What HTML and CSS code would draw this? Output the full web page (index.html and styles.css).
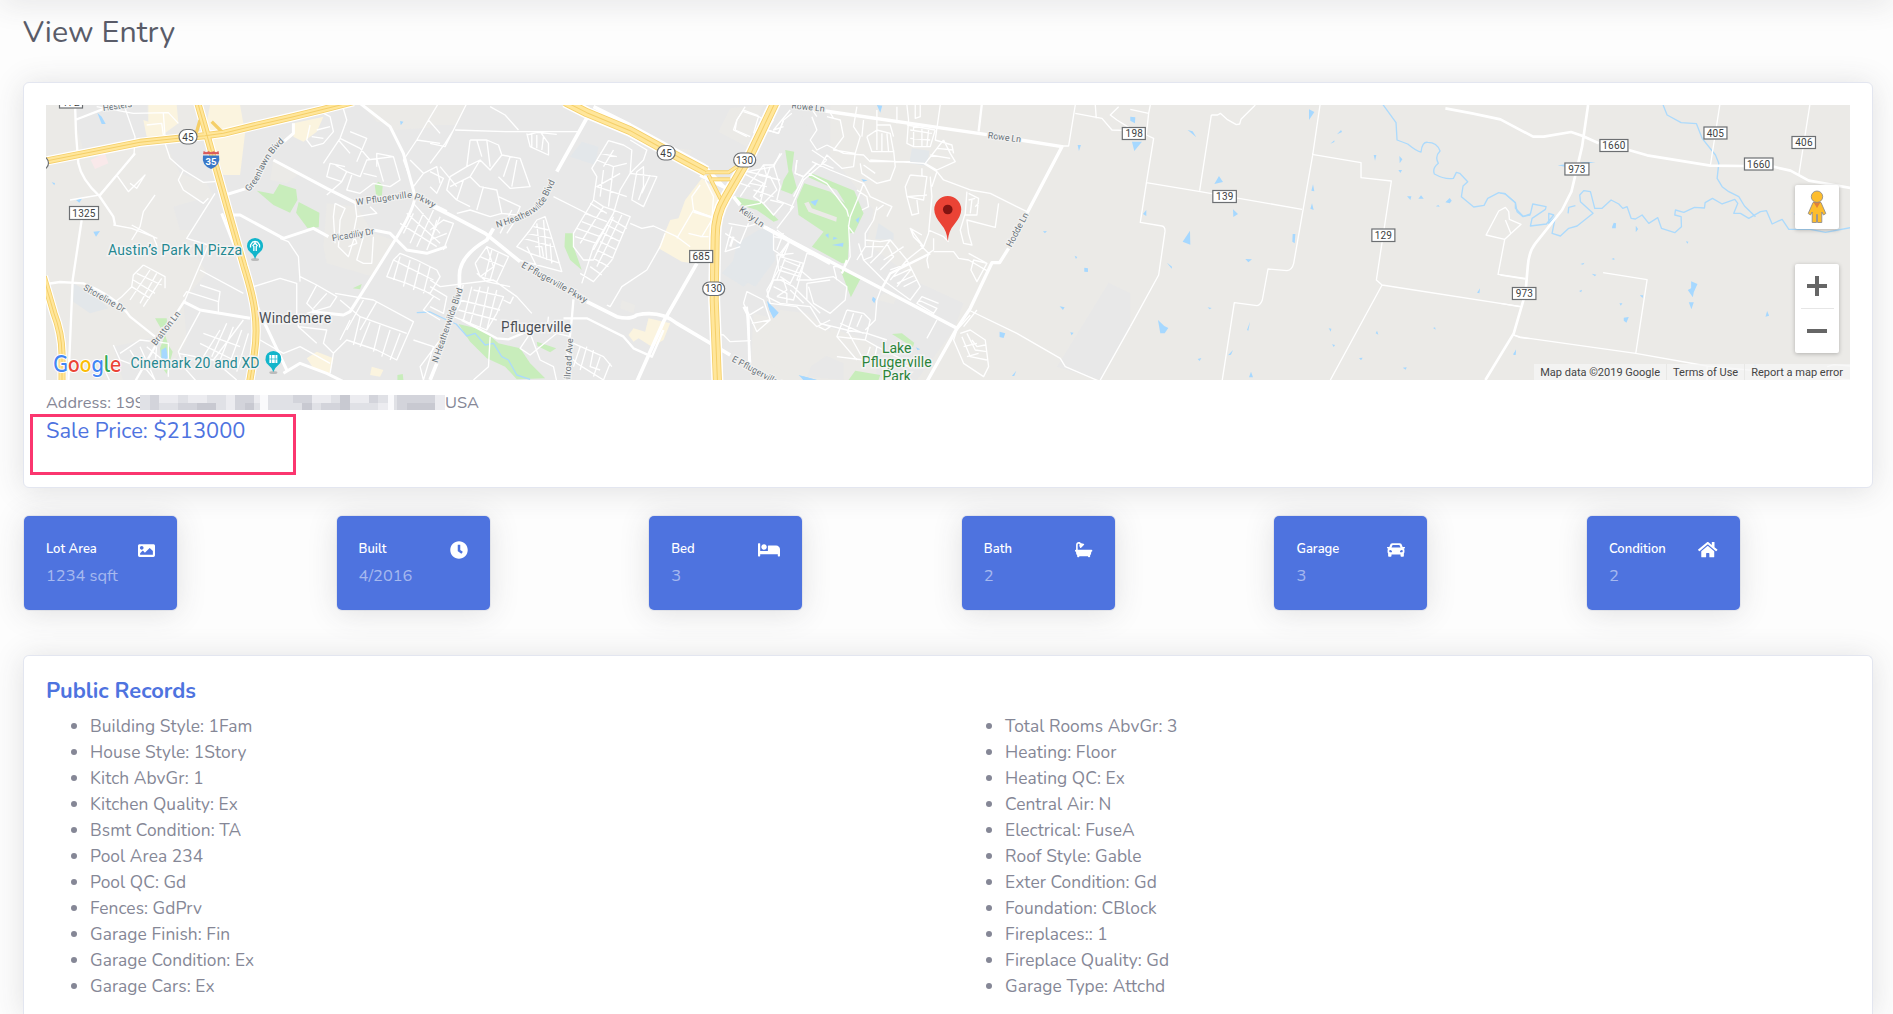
FILE: index.html
```
<!DOCTYPE html>
<html lang="en">
<head>
<meta charset="utf-8">
<title>View Entry</title>
<link rel="stylesheet" href="styles.css">
</head>
<body>
<div class="topbar-shadow"></div>
<main class="page">
  <h1 class="page-title"><span>View Entry</span></h1>

  <section class="card overview">
    <div class="map">
      <svg class="map-canvas" viewBox="46 105 1803.5 275" preserveAspectRatio="none">
        <defs>
          <path id="sh45w" d="M14 184L150 157L300 127L415 115L495 107L550 100L640 78L760 50L850 28L940 5"/>
          <path id="i35" d="M472 5L495 85L530 210L575 370L612 500Q640 590 645 640Q652 700 643 760L628 850"/>
          <path id="mopac" d="M10 530L42 640Q65 700 66 760L66 850"/>
          <path id="sh45e" d="M405 5L470 38L600 92L700 147L828 215"/>
          <path id="sh130" d="M1036 5L960 165L885 295Q855 345 855 410L852 600L862 850"/>
          <path id="ramp1" d="M825 217L895 217L935 190"/>
          <path id="ramp2" d="M845 238L900 238"/>
          <path id="ramp3" d="M835 225L878 310"/>
          <path id="heather" d="M200 383Q320 350 345 305Q365 265 378 238"/>
          <path id="wpf" d="M948 316Q1060 300 1105 293Q1150 303 1185 328"/>
          <path id="green" d="M626 276Q650 255 665 220Q690 160 740 120"/>
        </defs>

        <rect x="46" y="105" width="1804" height="275" fill="#ebeae7"/>

        <!-- built-up areas -->
        <g transform="translate(40 100) scale(.33333)">
          <path class="urban" d="M100 15L320 15L330 115L130 150L110 80ZM375 130L500 110L900 15L960 15L1060 90L1220 80L1220 845L370 845L440 720L430 600L500 520L440 415L520 290L500 250L420 220Z"/>
          <path class="urban" d="M400 320L470 300L560 300L520 390L420 390Z"/>
          <path class="urban" d="M220 740L350 710L400 845L250 845Z"/>
          <path fill="#ebeae7" d="M965 15L1210 15L1220 70L1090 75L1010 65ZM700 180L780 220L740 250L690 240ZM860 310L950 320L1000 400L1060 420L1000 530L860 490L850 440Z"/>
          <path class="shop" d="M325 15L410 15L415 70L360 110L325 90ZM510 15L600 15L615 100L600 225L550 225L515 120L500 70ZM760 70L850 50L830 95L790 125L760 110Z"/>
          <path class="shop" d="M310 60L370 80L375 115L320 110ZM800 775L830 755L880 775L870 820L820 805ZM995 800L1030 810L1020 830L990 825Z"/>
          <path class="office" d="M100 550L170 590L205 625L150 640L100 605Z"/>
          <path fill="#f9e9ea" d="M152 180L195 160L205 190L165 207Z"/>
          <path class="park" d="M650 272L700 282L718 252L768 268L772 300L750 338L700 315ZM776 306L838 338L836 382L802 384L768 338ZM1004 255L1015 245L1028 255L1025 290L1008 285ZM345 655L380 655L382 672L362 684ZM375 705L385 735L398 755L380 822L365 800L360 745ZM938 565L965 552L960 568ZM1072 825L1088 822L1090 840L1072 840Z"/>
          <path class="water" d="M172 38L185 50L197 72L185 72ZM108 300L127 294L118 308ZM160 395L180 393L168 410ZM35 247L45 249L43 256ZM364 750L378 742L386 780L364 778ZM1080 63L1090 65L1082 76Z"/>
        </g>
        <g transform="translate(430 100) scale(.33333)">
          <path class="urban" d="M0 15L1200 15L1200 700L970 640L960 845L0 845Z"/>
          <path fill="#ebeae7" d="M900 25L1000 15L950 140L865 95ZM1040 640L1200 700L1200 845L1130 845L965 770ZM735 145L785 150L775 175ZM575 600L615 615L610 640L570 625ZM0 15L110 15L75 75L0 75Z"/>
          <path class="office" d="M455 125L505 140L495 195L420 170ZM960 400L1040 390L1045 480L985 520L940 560L875 520L920 470Z"/>
          <path class="shop" d="M815 235L870 275L862 350L848 440L790 490L755 485L685 445L720 360L745 355L765 300ZM655 655L720 670L700 720L665 740L625 715L610 725L595 705L610 685L645 695Z"/>
          <path class="park" d="M405 400L428 400L430 440L455 510L420 480L403 440ZM1065 150L1092 155L1085 210L1100 265L1085 283L1052 270L1060 240L1075 215ZM915 290L990 305L1045 360L1030 365L980 330L930 315ZM85 672L160 690L205 730L270 745L300 790L345 835L260 838L225 800L170 775L120 725ZM320 725L378 745L360 757L322 738Z"/>
          <path class="water" d="M1010 602L1045 638L1030 655L1018 630ZM1105 825L1160 840L1120 840Z"/>
        </g>
        <g transform="translate(730 100) scale(.33333)">
          <path class="urban" d="M150 15L200 15L260 150L330 200L430 330L410 430L570 550L700 610L670 690L560 840L440 830L430 730L100 610L0 420L0 300ZM1135 548L1200 580L1200 680L1110 840L980 800ZM260 755L340 790L340 840L230 830Z"/>
          <path fill="#ebeae7" d="M150 630L230 640L330 720L300 760L240 800L210 840L80 770ZM460 580L500 590L490 612L440 600Z"/>
          <path class="office" d="M85 390L125 380L135 480L75 560L0 520L20 430ZM545 145L598 152L590 197L537 190ZM445 370L490 400L490 420L435 418Z"/>
          <path class="park" d="M165 150L192 155L185 210L200 265L185 283L152 270L160 240L175 215ZM240 218L372 272L400 340L372 398L358 400L352 490L335 490L245 440L280 395L205 345L200 300L222 250L300 275L345 310L320 270L235 232ZM330 508L390 538L362 592ZM15 290L90 305L145 360L130 365L80 330L30 315ZM485 702L515 700L552 728L548 742ZM375 812L450 825L445 840L355 840Z"/>
          <path class="water" d="M440 15L456 17L450 38ZM110 602L145 638L130 655L118 630ZM240 305L265 298L255 318ZM285 405L295 400L295 415ZM310 410L322 415L308 420ZM305 435L340 428L338 440ZM376 360L388 350L384 370ZM428 590L437 597L432 610L425 600ZM205 825L260 840L220 840ZM1042 135L1052 135L1046 153ZM938 394L950 393L944 400ZM1033 467L1041 471L1037 477ZM1062 503L1073 505L1073 516L1062 515ZM988 619L1003 622L998 630ZM808 695L825 700L820 714L808 711ZM1020 697L1030 698L1024 706ZM845 828L858 812L852 828ZM393 237L412 241L400 245ZM557 742L570 748L562 750Z"/>
        </g>
        <g transform="translate(1130 100) scale(.33333)">
          <path class="water" d="M0 50L15 52L14 70L0 62ZM5 125L35 125L12 153ZM172 90L187 94L198 112ZM536 28L552 36L536 60ZM620 103L632 90L635 96ZM600 131L612 121L612 126ZM252 252L266 228L278 246ZM308 328L323 342L309 351ZM38 342L48 330L48 348ZM157 425L179 392L180 434ZM110 488L125 500L124 506ZM487 402L495 402L493 430L486 425ZM345 477L365 478L354 487ZM543 272L548 253L552 274ZM540 326L545 310L550 330ZM730 165L738 165L734 182ZM807 168L816 178L808 190ZM804 210L815 210L810 219ZM830 289L843 289L840 300ZM864 296L872 286L880 296ZM945 307L958 294L964 302L958 310ZM916 319L924 315L928 320ZM83 660L102 678L114 684L103 700L90 700ZM232 622L244 624L238 628ZM350 690L359 665L354 692ZM293 766L308 750L302 764ZM202 777L213 774L208 783ZM356 832L362 815L368 832ZM595 685L603 686L601 695ZM605 733L614 735L610 741ZM736 700L740 692L744 704ZM686 774L697 773L692 781ZM817 803L829 802L826 809ZM908 684L914 682L916 689ZM1040 578L1049 565L1047 580ZM1149 765L1157 748L1155 765Z"/>
          <path class="creek" d="M755 10L797 68L800 120L832 132Q860 155 872 156Q875 125 892 127Q920 127 929 153Q912 170 924 190Q905 205 912 222Q945 240 969 235L978 217L988 220L1012 245L998 258L993 290L1030 321L1061 316L1072 295L1105 278L1125 282L1155 308L1155 325L1178 349L1200 345"/>
        </g>
        <g transform="translate(1500 70) scale(.33333)">
          <path class="creek" d="M0 370L12 370L45 398L50 425L68 440L90 432L97 402L137 410L135 418L95 445L90 468L138 462L160 435L145 430L145 460L165 440L155 490L180 498L205 475L230 468L278 430L240 395L238 375L250 362L270 365L283 415L305 415L332 390L355 402L367 415L380 410L392 445L405 447L425 435L445 460L472 443L483 475L523 488L543 470L542 440L523 435L525 420L550 427L582 412L612 414L614 398L636 385L665 402L703 388L712 400L700 430L720 430L745 445L780 425L798 422L815 462L845 448L865 478L930 478L975 487L1050 473"/>
          <path class="creek" d="M488 105L500 135L542 158L588 161L605 205L645 255L655 280L650 325L665 350L685 365L715 380L732 408L765 440"/>
          <path class="creek" d="M203 430L205 412L225 407"/>
          <path class="water" d="M172 286L225 280L200 292ZM240 276L285 276L250 283ZM335 470L340 458L347 460L346 475L335 475ZM406 467L413 477L406 487ZM556 514L564 515L561 521ZM240 582L252 578L248 584ZM274 611L288 614L283 619ZM333 567L341 564L342 570ZM236 663L245 659L242 667ZM357 700L366 700L361 707ZM418 676L428 676L427 684ZM370 743L385 741L378 758L370 752ZM572 634L591 642L580 667L577 682L562 660L572 655ZM565 697L580 697L573 718ZM795 740L800 723L806 737ZM38 853L47 840L45 855ZM882 432L888 425L888 440ZM758 885L768 884L765 892Z"/>
        </g>
        <g transform="translate(430 100) scale(.33333)"><path class="creek" d="M-40 638L0 636L50 660L78 672L110 708L135 700L165 735L190 730L215 770L235 780L260 825L300 838"/></g>
        <g transform="translate(730 100) scale(.33333)"><path fill="#ebeae7" d="M222 310L235 305L245 325L320 352L318 365L235 335Z"/></g>

        <!-- residential streets -->
        <g class="minor" transform="translate(40 100) scale(.33333)">
          <path d="M250 10L285 110L282 165L178 285L90 300M170 20L280 40L385 38L415 70M320 75L365 70L370 105M370 40L375 110M375 130L390 175L430 210L490 247L525 245M430 210L415 240L430 270L490 310L505 295M525 280L440 415L505 435M232 228L265 275L315 225L290 265L270 250M345 285L310 335L300 380L275 420M220 375L275 385L352 415M275 375L340 410L352 440M435 600L505 435M480 510L610 580M310 495L375 530L375 565M310 495L280 525L275 560L245 590L220 610M290 520L365 555M280 540L345 580M275 560L330 595M330 510L270 600M350 520L300 610M365 535L310 620"/>
          <path d="M640 560L720 535L770 550L770 640L775 680L830 730M780 545L775 470L745 425M745 425L720 415M780 530L830 555L890 590L870 620L800 640M830 555L800 610L830 640M860 580L820 625M775 680L860 690L850 730L880 760L870 820M885 580L1000 600L1120 665L1070 780L1010 750L920 720L880 760M900 600L960 650L1100 700M930 660L900 720M960 650L940 735M990 665L960 740M1020 675L1000 755M1050 690L1025 770M1080 700L1050 780M970 600L920 690M1010 605L960 690M1200 720L1140 800L1150 840M1120 720L1180 740L1150 840"/>
          <path d="M430 590L440 575L535 605L535 640M480 555L540 575L535 610M480 635L415 755L430 800L470 845M415 760L520 780L590 840M520 780L610 660M540 690L490 770M560 670L515 770M580 680L540 780M605 690L565 800M625 700L590 815M490 700L600 740M480 730L580 780M660 720L730 760L780 740L870 790M220 735L240 780L320 810L345 840M240 760L300 720L385 730L385 830M270 750L300 800M300 740L345 840M320 740L380 790M350 735L345 800M190 800L210 845"/>
          <path d="M810 75L800 120L815 140L850 130L880 95L870 50L840 35M830 90L870 80M815 110L850 115M905 10L920 60L900 115L850 190M900 115L960 145L990 180M930 95L980 115L950 185M895 120L930 160M885 195L920 215L905 245L860 230L870 190L915 200M905 245L860 285M920 215L960 230L980 180L1060 170L1080 240L1050 260L1000 250L960 280L920 270L935 225M970 220L1010 230M1010 175L1030 245M1060 170L1010 160L1010 200M1110 180L1150 220L1190 200L1200 250M1150 220L1120 260L1090 180L1130 120L1200 130M1130 120L1165 60L1195 10M1165 60L1200 100M1200 200L1250 260"/>
          <path d="M885 310L915 325L900 360L895 440L925 470L950 390L1000 400M885 310L880 350L885 430M945 310L950 350L940 400L950 430L925 440M950 350L1010 340L990 320M970 410L950 480L970 490L995 490L1000 410M1120 310L1200 400M1100 340L1200 430M1080 370L1190 440M1120 340L1090 400M1150 340L1110 430M1180 330L1130 440M1200 350L1160 450M1060 480L1080 460L1130 480L1190 510L1200 530L1170 580L1100 550L1040 530L1060 480L1100 500L1180 540M1080 470L1060 540M1110 480L1090 560M1140 490L1120 570M1170 500L1150 580M1150 570L1200 600M1180 590L1150 630L1200 660"/>
        </g>
        <g class="minor" transform="translate(430 100) scale(.33333)">
          <path d="M110 10L70 90L45 130L0 190M75 90L225 95L445 95M180 20L225 45L265 90M70 90L45 140L0 130M120 120L170 120L205 135L215 165L180 210L150 180L110 200L120 120M140 120L155 170M170 120L180 200M215 165L270 175L300 260L240 265L205 230M240 170L220 230M260 180L245 260M110 200L60 230L50 270L80 300L120 320M150 180L120 230L150 260L200 270L215 340L180 350L120 330L80 340M120 230L60 260M100 240L80 300M160 260L140 330M0 215L40 235L20 280L0 260M205 290L270 320L250 370L230 400M215 340L260 345M245 330L210 400M290 100L300 140L355 165L355 130L330 95L290 105M320 105L320 145M340 110L335 150M305 100L305 140M380 103L300 95"/>
          <path d="M300 390L260 440L300 460L390 490M300 390L320 360L345 350L370 430L395 515L265 480M280 415L370 440M290 400L365 415M310 380L355 390M320 370L330 470M340 360L350 480M290 440L320 500M315 440L335 440L340 470M360 430L365 490M135 490L170 440L235 470L200 545L150 530L135 490M170 440L190 500L150 530M150 470L220 500M185 450L165 530M205 455L180 540M0 390L40 360L70 370L40 450M0 420L50 400M20 360L0 430M0 540L30 560L190 540L260 590L305 640M100 550L90 610L70 650L170 690L200 640L220 590L130 570M125 560L100 660M150 560L120 670M175 560L150 680M200 570L170 690M90 600L210 630M85 630L200 660M250 590L240 610L220 600M240 560L170 545L140 520M0 560L50 590L40 640L0 620"/>
          <path d="M535 122L580 135L605 150L600 220L570 270L550 340L490 440L455 550M535 122L485 205L500 230L490 300L430 400L430 440L460 480L490 480L550 350M500 180L550 200L590 190M510 160L560 170M490 300L520 320L550 330L600 350L545 480L490 545L450 520M520 320L450 430M520 210L510 290M550 200L535 320M570 220L500 260L590 290M550 150L520 200M480 310L530 340M465 340L530 365M455 365L520 390M440 385L510 410M435 410L500 430M540 355L590 385M530 375L580 400M520 400L570 425M510 425L560 450M500 450L550 475M490 475L535 500M480 500L515 525M550 340L490 450M575 345L500 500M600 120L650 150L640 180L600 220L680 230L640 320L605 300L620 215M620 215L640 200L640 260L625 300M660 225L635 280M370 290L450 330L490 350M600 370L635 385L670 378L740 410L780 440M705 400L690 440L650 510L575 560L540 620L530 615"/>
          <path d="M810 255L785 290L790 330L840 350M825 240L850 290L845 360L815 410L775 400M740 415L790 330M810 410L835 410M920 60L940 30L980 45L1000 60M920 60L915 90L960 110M1030 60L1010 90L1045 100L1060 60L1085 40M940 35L985 50L970 100"/>
          <path d="M975 230L1000 195L1030 195L1055 160M975 230L950 260L930 290M1000 195L1010 230L990 310L940 320M1030 195L1050 260L1040 300L1090 320L1040 385M960 250L1010 260M985 225L1050 240M970 270L1030 290M1020 200L990 290M1100 180L1095 220L1120 230L1160 190M1120 230L1090 290M895 370L950 380L985 370M885 400L930 430L955 370M905 380L885 455L930 440M1040 390L1080 420L1060 470L1030 450L1030 400M1060 400L1040 450M1090 460L1040 465L1045 510L1010 570L1020 610L1100 620L1160 680L1200 660M1045 510L1110 530L1130 460L1200 480M1110 530L1090 600L1040 590M1130 550L1200 540M1130 550L1130 600L1170 640M1050 540L1090 560L1130 600M1060 480L1110 500M1030 560L1070 580L1070 610M940 610L950 575L1000 600L1020 660L980 695L960 650L940 610M950 650L1000 620M965 670L1020 660M850 700L880 705L900 725L962 722"/>
          <path d="M430 730L410 760L440 790L520 840M450 740L430 800M470 740L450 810M490 750L480 800L510 810M510 770L490 830M540 790L520 840M430 730L520 770L545 800M300 700L270 745L300 765L330 740M300 700L330 780L370 800L380 845M330 740L380 700L420 710M180 710L175 800L130 840M355 650L350 690"/>
        </g>
        <g class="minor" transform="translate(730 100) scale(.33333)">
          <path d="M245 50L260 90L240 120L260 150L290 135M290 50L330 60L340 110L310 150L375 160L390 110L370 80L380 20M260 50L240 20M310 55L295 30M290 135L340 160L400 165L420 185L540 185M375 160L370 200L335 205L290 165L275 190L310 205M410 110L440 90L480 100L490 155L425 155L410 110M440 90L440 150M455 100L455 155M470 100L475 155M440 30L440 90M440 75L480 75L490 110M400 60L395 110M390 190L395 220L440 250L480 240L495 200L490 150M400 195L435 220M500 20L500 70M530 15L535 60L530 130L550 140L600 140L615 90M555 15L555 55L570 50L570 15M530 75L615 90M540 90L605 100M540 115L600 120M550 80L550 140M575 80L575 140M595 90L590 140M640 120L585 190L620 210L675 185L660 160L640 120M620 145L670 150M600 165L660 175M630 15L615 120L665 135L670 160M420 180L580 190L620 215L640 240L720 270L780 280L890 335"/>
          <path d="M540 225L590 230L580 300L530 290L525 260L540 225M590 285L530 290L545 345L565 340L560 300M575 205L575 230M600 230L605 290L595 400L580 440L540 385L575 405M620 215L605 260M540 385L550 410L580 440M595 390L640 410L655 425M710 275L705 340L690 390L700 430L725 435L715 400L710 360L795 382L805 310M715 280L745 295L740 345L705 345M725 300L720 340M735 295L715 300M745 310L735 320M610 415L610 450L595 460L590 480L595 505M610 455L670 455L685 475L715 480L775 515M715 460L770 490L740 545L722 510L730 480L770 490M580 440L530 480M595 460L570 435"/>
          <path d="M290 180L220 240L180 330M245 185L300 210L400 250L420 290L485 320L470 350M400 250L385 290L360 350L355 380L370 400M380 270L410 290L415 320L395 330M235 220L290 250L350 330L355 350M440 320L430 360L405 400L405 440L380 480M460 315L440 330M290 180L245 150M355 375L360 470L335 520M405 420L450 425L480 420L530 480L570 560L540 600L465 545L400 480L385 430M430 425L425 470L400 480M480 420L450 460L420 490M460 480L520 440M480 510L535 490M490 530L545 505M500 550L555 525M520 560L560 540M470 430L490 470L450 510M405 440L460 440M530 480L480 540M545 505L500 560M565 600L620 625L610 640L560 610L575 590L625 610"/>
          <path d="M130 410L180 420L150 470L110 590L150 610L240 620L270 670L350 690L410 700L470 720M180 420L150 460M150 470L220 490L200 540L245 540L310 530L350 560L345 600L300 640L250 610L235 560M210 490L180 550L150 530M165 475L140 540M150 500L210 520M110 590L130 540L160 540L170 570L140 590M245 540L210 510M320 540L310 500L330 500M180 570L220 610M270 670L300 680L285 690L265 680M350 630L400 640L420 660L405 720L320 710L350 630M330 670L400 700M370 640L350 700M395 645L380 680M320 710L380 780M350 690L400 780L320 770M405 720L440 740L430 790L560 800L500 770L440 740M420 740L400 800M455 560L440 600L435 660L405 690M620 660L590 715"/>
          <path d="M160 80L130 90L180 30M30 210L120 230L140 270L100 310L70 290L100 250L40 220M0 240L60 260M100 310L130 345L160 310L120 300M200 180L195 220L220 230L260 190M150 160L130 200L50 215M45 20L20 60L10 90L50 110M130 50L110 90L145 100L160 60"/>
          <path d="M720 645L680 690L670 720L700 790L760 830L775 800L765 720L720 690L690 700M740 630L700 680M695 710L720 770L770 780M710 700L735 750L770 755M725 720L740 740L765 735M700 740L740 730M710 770L745 760M715 630L860 700L990 775L1005 800L1110 845M1110 840L1200 680M1035 15L1015 138L990 138M1035 40L1115 55L1145 90L1200 92M1095 15L1098 55M1165 20L1140 45L1160 60L1200 85"/>
        </g>
        <g class="minor" transform="translate(1130 100) scale(.33333)">
          <path d="M60 15L55 40L0 28M55 40L48 105L70 115L48 250L30 367L95 378Q105 380 104 395L85 525L0 680M48 248L210 275L515 328M243 45L208 272M243 45L262 45L270 40L290 58L318 74L328 72L332 58L375 15M569 15L547 165L490 490Q485 510 470 512L413 507L396 600Q390 615 380 617L312 608L275 845M545 163L692 188L692 233L783 243L738 540L755 555L600 840M755 555L1172 620M1067 405L1105 333L1125 322L1135 335L1137 358L1172 373L1123 418ZM1125 360L1142 402M1123 418L1103 523L1185 535M1148 705L1170 713L1200 716"/>
        </g>
        <g class="minor" transform="translate(1500 70) scale(.33333)">
          <path d="M658 105L630 285M928 105L895 315M308 608L440 629L406 850M35 793L58 801L406 850L620 888L1050 930M0 615L75 627M0 700L65 711M980 890L1000 884L1050 888M620 888L620 930"/>
        </g>

        <!-- arterial roads -->
        <g class="major" transform="translate(40 100) scale(.33333)">
          <path d="M105 10L108 100L115 190Q125 240 178 288L220 350L225 375M178 288L285 160M105 60L195 25M125 360L98 540L85 845M20 552L60 546L130 550Q230 590 270 650L345 710M285 845L345 740L435 600"/>
          <path stroke-width="9" d="M760 70L760 100L725 130M555 285L620 265M700 180L860 265L950 310M1170 310L1220 335M575 345L600 345L730 415L820 385L865 410M960 10L1050 80L1090 160L1125 290Q1120 330 1070 412L990 540L930 635L910 645L815 635M1000 390L1050 400L1100 450L1160 460L1220 440M430 605L480 630L630 655M545 340L600 480L660 640L740 810M730 820L780 790L860 820L910 845"/>
        </g>
        <g class="major" transform="translate(430 100) scale(.33333)">
          <path stroke-width="11" d="M475 45L380 215M190 385L170 420Q85 470 88 530L88 570M20 790L0 840M0 315L70 350L165 400L270 485M470 605L560 650Q600 660 620 645Q690 630 740 670L900 765M800 490L700 665L620 845M490 20L600 75L820 195L880 260M810 225L890 265M910 290L930 315M1000 380L1200 490"/>
          <path d="M95 660L200 715L235 718L290 695M430 598L425 655L418 720M400 655L470 655L580 710L610 745L665 770L700 690M940 620L955 650L957 790M790 335L848 353"/>
        </g>
        <g class="major" transform="translate(730 100) scale(.33333)">
          <path stroke-width="10" d="M285 33L770 104M870 120L995 140L890 340M835 445L808 488L785 488L720 625L680 685L590 845M105 382L680 685"/>
          <path d="M755 10L745 95M455 565L480 520L600 460M335 520L350 480M0 440L10 410M50 620L60 790"/>
        </g>
        <g class="major" transform="translate(1500 70) scale(.33333)">
          <path stroke-width="8" d="M-165 115Q-80 130 0 148L98 200L130 200L212 186L245 197L295 220M385 240L440 256L630 287L730 288M818 290L870 302L925 332L1050 354M263 105L245 230L213 365L185 420L105 520Q85 545 82 590L75 670L40 790L-45 930"/>
        </g>

        <!-- highways -->
        <g class="hwy" transform="translate(40 100) scale(.33333)">
          <g class="casing"><use href="#sh45w"/><use href="#i35"/><use href="#mopac"/></g>
          <g class="edge"><path stroke-width="10" d="M452 98L470 95L480 60M515 65L545 95"/><use href="#sh45w"/><use href="#i35"/><use href="#mopac"/></g>
          <g class="fill"><use href="#sh45w"/><use href="#i35"/><use href="#mopac"/></g>
          <g class="center"><use href="#sh45w"/><use href="#i35"/><use href="#mopac"/></g>
        </g>
        <g class="hwy" transform="translate(430 100) scale(.33333)">
          <g class="casing wide"><use href="#sh45e"/><use href="#sh130"/></g>
          <g class="edge thin"><use href="#ramp1"/><use href="#ramp2"/><use href="#ramp3"/></g>
          <g class="fill thin"><use href="#ramp1"/><use href="#ramp2"/><use href="#ramp3"/></g>
          <g class="edge wide"><use href="#sh45e"/><use href="#sh130"/></g>
          <g class="fill wide"><use href="#sh45e"/><use href="#sh130"/></g>
          <g class="center"><use href="#sh45e"/><use href="#sh130"/></g>
        </g>

        <!-- street names -->
        <g class="street" transform="translate(40 100) scale(.33333)">
          <text x="190" y="33" textLength="88" transform="rotate(-8 190 33)">Hesters</text>
          <text><textPath href="#green" textLength="186">Greenlawn Blvd</textPath></text>
          <text><textPath href="#wpf" textLength="240">W Pflugerville Pkwy</textPath></text>
          <text x="877" y="424" textLength="128" transform="rotate(-10 877 424)">Picadilly Dr</text>
          <text x="128" y="568" textLength="140" transform="rotate(30 128 568)">Shoreline Dr</text>
          <text x="347" y="738" textLength="122" transform="rotate(-52 347 738)">Bratton Ln</text>
        </g>
        <g class="street" transform="translate(430 100) scale(.33333)">
          <text><textPath href="#heather" textLength="235">N Heatherwilde Blvd</textPath></text>
          <text x="272" y="500" textLength="222" transform="rotate(29.5 272 500)">E Pflugerville Pkwy</text>
          <text x="22" y="790" textLength="235" transform="rotate(-71 22 790)">N Heatherwilde Blvd</text>
          <text x="418" y="870" textLength="155" transform="rotate(-86 418 870)">Railroad Ave</text>
          <text x="925" y="333" textLength="85" transform="rotate(36 925 333)">Kelly Ln</text>
          <text x="903" y="783" textLength="222" transform="rotate(28 903 783)">E Pflugerville Pkwy</text>
          <text x="1083" y="25" textLength="100" transform="rotate(6 1083 25)">Rowe Ln</text>
        </g>
        <g class="street" transform="translate(730 100) scale(.33333)">
          <text x="772" y="115" textLength="100" transform="rotate(7 772 115)">Rowe Ln</text>
          <text x="843" y="443" textLength="112" transform="rotate(-62 843 443)">Hodde Ln</text>
        </g>

        <!-- places -->
        <g class="place">
          <text x="259" y="323.2" textLength="72">Windemere</text>
          <text x="501" y="331.8" textLength="70">Pflugerville</text>
        </g>
        <g class="poi">
          <text x="108" y="255" textLength="134">Austin’s Park N Pizza</text>
          <text x="130.5" y="367.8" textLength="129">Cinemark 20 and XD</text>
        </g>
        <g class="green-place">
          <text x="896.5" y="353">Lake</text>
          <text x="896.5" y="367" textLength="70">Pflugerville</text>
          <text x="896.5" y="381">Park</text>
        </g>

        <!-- route shields -->
        <g class="route">
          <rect x="59.5" y="95" width="23" height="13"/><text x="71" y="106">172</text>
          <rect x="69.5" y="206.5" width="29" height="13"/><text x="84" y="217">1325</text>
          <rect x="689.5" y="250.5" width="23" height="12"/><text x="701" y="260.5">685</text>
          <rect x="1122" y="127.5" width="23" height="12"/><text x="1134" y="137.5">198</text>
          <rect x="1212.5" y="190.5" width="23.5" height="12"/><text x="1224.5" y="200.5">139</text>
          <rect x="1371.5" y="229" width="23" height="12.5"/><text x="1383" y="239">129</text>
          <rect x="1512" y="287.5" width="23.5" height="12"/><text x="1524" y="297.5">973</text>
          <rect x="1564.5" y="163" width="24" height="12"/><text x="1576.5" y="173">973</text>
          <rect x="1599.5" y="139.5" width="28" height="12"/><text x="1613.5" y="149.5">1660</text>
          <rect x="1703.5" y="127" width="23" height="12"/><text x="1715" y="137">405</text>
          <rect x="1791.5" y="136.5" width="23.5" height="12"/><text x="1803.5" y="146.5">406</text>
          <rect x="1744" y="158" width="28.5" height="12"/><text x="1758.3" y="168">1660</text>
          <rect x="179" y="129.5" width="18" height="14.5" rx="7.2"/><text x="188" y="140.6">45</text>
          <rect x="657" y="145.5" width="18" height="14.5" rx="7.2"/><text x="666" y="156.6">45</text>
          <rect x="733.5" y="153" width="22" height="14" rx="7"/><text x="744.5" y="163.8">130</text>
          <rect x="702.5" y="282" width="22" height="13.5" rx="6.7"/><text x="713.5" y="292.3">130</text>
          <rect x="29" y="156.5" width="19.5" height="13" rx="6.5"/>
        </g>
        <g>
          <path d="M203 155.5L219 155.5Q221 165 211 169Q201 165 203 155.5Z" fill="#3a78c8"/>
          <path d="M203 154.3L203.6 151L206 152.3L208.5 151.3L211 152.3L213.5 151.3L216 152.3L218.500 151L219 154.3Z" fill="#d95a5a"/>
          <text class="interstate" x="211" y="165">35</text>
        </g>

        <!-- place pins -->
        <g class="pin" transform="translate(255 246)">
          <ellipse cx="0" cy="13.5" rx="4" ry="1.5" fill="#bbb"/>
          <path fill="#12b5cb" d="M0 13Q-1.5 8.5-4.5 6.5A8 8 0 1 1 4.5 6.5Q1.5 8.5 0 13Z"/>
          <path d="M-1.200 5V0M1.200 5V0M-4.500 1.500V-1L-2.500-4L0-4.500L2.500-4L4.500-1V1.500M-2.500 0L0-3L2.500 0" fill="none" stroke="#fff" stroke-width="1.300"/>
        </g>
        <g class="pin" transform="translate(273.3 359)">
          <ellipse cx="0" cy="13.5" rx="4" ry="1.5" fill="#bbb"/>
          <path fill="#12b5cb" d="M0 13Q-1.5 8.5-4.5 6.5A8 8 0 1 1 4.5 6.5Q1.5 8.5 0 13Z"/>
          <path d="M-4-4H4V4H-4Z" fill="#fff"/><path d="M-1.8-4V4M1.8-4V4M-4 0H4" stroke="#12b5cb" stroke-width=".7"/>
        </g>
        <g transform="translate(947.5 209.5)">
          <path fill="#ea4335" d="M0 31.5Q-1 21-6.5 15Q-13.5 6.5-13.5 0A13.5 13.5 0 0 1 13.5 0Q13.5 6.5 6.5 15Q1 21 0 31.5Z"/>
          <circle r="4.8" fill="#811411"/>
        </g>
        <text class="google" x="53" y="372.5" textLength="68" lengthAdjust="spacingAndGlyphs"><tspan fill="#4285f4">G</tspan><tspan fill="#ea4335">o</tspan><tspan fill="#fbbc05">o</tspan><tspan fill="#4285f4">g</tspan><tspan fill="#34a853">l</tspan><tspan fill="#ea4335">e</tspan></text>
      </svg>
      <div class="map-controls">
        <button class="control pegman" aria-label="Street View">
          <svg width="20" height="34" viewBox="0 0 20 34">
            <path d="M6 12.5H14L18.8 23.5L16.5 25L14.8 22V32.5H10.5V24.5H9.5V32.5H5.2V22L3.5 25L1.2 23.5Z" fill="#fdbd2d" stroke="#85858a" stroke-width=".8"/>
            <path d="M6.5 12.3H13.5L10 18Z" fill="#e0813a"/>
            <circle cx="10" cy="6.7" r="5.7" fill="#fdbd2d" stroke="#85858a" stroke-width=".8"/>
          </svg>
        </button>
        <div class="control zoom">
          <svg width="20" height="20" viewBox="0 0 20 20"><path d="M8 0H12V8H20V12H12V20H8V12H0V8H8Z" fill="#666"/></svg>
          <i class="divider"></i>
          <svg width="20" height="20" viewBox="0 0 20 20"><path d="M0 8H20V12H0Z" fill="#666"/></svg>
        </div>
      </div>
      <div class="map-legal"><span>Map data ©2019 Google</span><span>Terms of Use</span><span>Report a map error</span></div>
    </div>
    <p class="address"><span class="addr-start">Address: 199</span><svg class="redacted" width="305" height="15" viewBox="0 0 32 2" preserveAspectRatio="none" shape-rendering="crispEdges">
      <path fill="#e0e1e6" d="M0 0H32V2H0Z"/>
      <path fill="#d3d4db" d="M1 0H2V2H1ZM4 1H8V2H4ZM10 0H12V2H10ZM16 0H18V1H16ZM19 1H22V2H19ZM24 0H25V1H24ZM27 0H31V2H27Z"/>
      <path fill="#c8c9d1" d="M6 1H8V2H6ZM11 1H12V2H11ZM17 1H18V2H17ZM21 0H22V2H21ZM28 1H31V2H28Z"/>
      <path fill="#ececf0" d="M2 0H4V1H2ZM5 0H7V1H5ZM9 0H10V2H9ZM12 0H13V1H12ZM18 0H20V1H18ZM22 0H24V1H22ZM25 1H26V2H25ZM31 0H32V2H31Z"/>
      <path fill="#fafafc" d="M12.600 0H13.400V2H12.600ZM26 0H26.600V2H26Z"/>
    </svg><span>USA</span></p>
    <p class="sale-price"><span>Sale Price: $213000</span></p>
    <div class="highlight"></div>
  </section>

  <div class="stats">
    <div class="stat"><div class="stat-head">Lot Area<svg class="ico" width="17" height="17" viewBox="0 0 512 512"><path d="M464 448H48c-26.500 0-48-21.500-48-48V112c0-26.500 21.500-48 48-48h416c26.500 0 48 21.500 48 48v288c0 26.500-21.500 48-48 48zM112 120c-31 0-56 25-56 56s25 56 56 56 56-25 56-56-25-56-56-56zM64 384h384V272l-87.500-87.500c-4.700-4.700-12.300-4.700-17 0L208 320l-55.500-55.500c-4.700-4.700-12.300-4.700-17 0L64 336v48z"/></svg></div><div class="stat-value">1234 sqft</div></div>
    <div class="stat"><div class="stat-head">Built<svg class="ico" width="18" height="18" viewBox="0 0 512 512"><path d="M256 8C119 8 8 119 8 256s111 248 248 248 248-111 248-248S393 8 256 8zm57.100 350.100L224.900 294c-3.100-2.300-4.900-5.900-4.900-9.700V116c0-6.600 5.400-12 12-12h48c6.600 0 12 5.400 12 12v137.700l63.500 46.200c5.400 3.900 6.500 11.400 2.600 16.800l-28.200 38.800c-3.900 5.300-11.400 6.500-16.800 2.600z"/></svg></div><div class="stat-value">4/2016</div></div>
    <div class="stat"><div class="stat-head">Bed<svg class="ico" width="22" height="17.6" viewBox="0 0 640 512"><path d="M176 256c44.100 0 80-35.900 80-80s-35.900-80-80-80-80 35.900-80 80 35.900 80 80 80zm352-128H304c-8.800 0-16 7.200-16 16v144H64V80c0-8.800-7.200-16-16-16H16C7.200 64 0 71.200 0 80v352c0 8.800 7.200 16 16 16h32c8.800 0 16-7.200 16-16v-48h512v48c0 8.800 7.200 16 16 16h32c8.800 0 16-7.200 16-16V240c0-61.900-50.100-112-112-112z"/></svg></div><div class="stat-value">3</div></div>
    <div class="stat"><div class="stat-head">Bath<svg class="ico" width="17.3" height="17.3" viewBox="0 0 512 512"><path d="M488 256H80V112c0-17.645 14.355-32 32-32 11.351 0 21.332 5.945 27.015 14.880-16.492 25.207-14.687 59.576 6.838 83.035-4.176 4.713-4.021 11.916.491 16.428l11.314 11.314c4.686 4.686 12.284 4.686 16.971 0l95.030-95.029c4.686-4.686 4.686-12.284 0-16.971l-11.314-11.314c-4.512-4.512-11.715-4.666-16.428-.491-17.949-16.469-42.294-21.429-64.178-15.365C163.281 45.667 139.212 32 112 32c-44.112 0-80 35.888-80 80v144h-8c-13.255 0-24 10.745-24 24v16c0 13.255 10.745 24 24 24h8v32c0 28.430 12.362 53.969 32 71.547V456c0 13.255 10.745 24 24 24h16c13.255 0 24-10.745 24-24v-8h256v8c0 13.255 10.745 24 24 24h16c13.255 0 24-10.745 24-24v-32.453c19.638-17.578 32-43.117 32-71.547v-32h8c13.255 0 24-10.745 24-24v-16c0-13.255-10.745-24-24-24z"/></svg></div><div class="stat-value">2</div></div>
    <div class="stat"><div class="stat-head">Garage<svg class="ico" width="18" height="18" viewBox="0 0 512 512"><path d="M500 168h-55l-8-21-17-43C403 62 363 64 320 64H192c-43 0-83-2-100 40l-17 43-8 21H12c-8 0-14 7-12 15l6 24c1 5 6 9 12 9h20c-14 12-22 29-22 48v48c0 16 6 31 16 42v62c0 18 14 32 32 32h32c18 0 32-14 32-32v-32h256v32c0 18 14 32 32 32h32c18 0 32-14 32-32v-62c10-11 16-26 16-42v-48c0-19-8-36-22-48h20c6 0 11-4 12-9l6-24c2-8-4-15-12-15zM151 128c7-18 22-16 41-16h128c19 0 34-2 41 16l23 56H128zM96 320c-19 0-32-13-32-32s13-32 32-32 48 29 48 48-29 16-48 16zm320 0c-19 0-48 3-48-16s29-48 48-48 32 13 32 32-13 32-32 32z"/></svg></div><div class="stat-value">3</div></div>
    <div class="stat"><div class="stat-head">Condition<svg class="ico" width="19.5" height="17.3" viewBox="0 0 576 512"><path d="M280 148L96 300v164c0 9 7 16 16 16h112c9 0 16-7 16-16v-96c0-9 7-16 16-16h64c9 0 16 7 16 16v96c0 9 7 16 16 16h112c9 0 16-7 16-16V300L296 148c-5-4-11-4-16 0zM572 251L488 182V44c0-7-5-12-12-12h-56c-7 0-12 5-12 12v72L318 43c-18-14-43-14-61 0L4 251c-5 4-6 12-2 17l26 31c4 5 12 6 17 2L280 107c5-4 11-4 16 0l235 194c5 4 13 3 17-2l26-31c4-5 3-13-2-17z"/></svg></div><div class="stat-value">2</div></div>
  </div>

  <section class="card records">
    <h2 class="records-title"><span>Public Records</span></h2>
    <div class="record-cols">
      <ul>
        <li>Building Style: 1Fam</li><li>House Style: 1Story</li><li>Kitch AbvGr: 1</li><li>Kitchen Quality: Ex</li><li>Bsmt Condition: TA</li><li>Pool Area 234</li><li>Pool QC: Gd</li><li>Fences: GdPrv</li><li>Garage Finish: Fin</li><li>Garage Condition: Ex</li><li>Garage Cars: Ex</li>
      </ul>
      <ul>
        <li>Total Rooms AbvGr: 3</li><li>Heating: Floor</li><li>Heating QC: Ex</li><li>Central Air: N</li><li>Electrical: FuseA</li><li>Roof Style: Gable</li><li>Exter Condition: Gd</li><li>Foundation: CBlock</li><li>Fireplaces:: 1</li><li>Fireplace Quality: Gd</li><li>Garage Type: Attchd</li>
      </ul>
    </div>
  </section>
</main>
</body>
</html>
```
FILE: styles.css
```
* { box-sizing: border-box; }
html { overflow: hidden; }
body {
  margin: 0;
  height: 1014px;
  overflow: hidden;
  background: #fdfdfd;
  color: #858796;
  font-family: Nunito, Lato, "Open Sans", sans-serif;
  font-size: 17.33px;
  line-height: 26px;
}
h1, h2, p, ul { margin: 0; padding: 0; }
.topbar-shadow {
  position: absolute;
  top: -20px; left: 0; right: 0;
  height: 20px;
  box-shadow: 0 2.6px 30px rgba(58, 59, 69, .15);
}
.page { padding: 13px 20px 0 23px; }
.page-title {
  height: 69px;
  color: #5a5c69;
  font-size: 30.4px;
  font-weight: 400;
  line-height: 38px;
  letter-spacing: .1px;
}
.card {
  position: relative;
  background: #fff;
  border: 1px solid #e3e6f0;
  border-radius: 6px;
  box-shadow: 0 2.6px 30px rgba(58, 59, 69, .15);
}
.overview { height: 406px; padding: 22px; }
.map { position: relative; height: 275px; overflow: hidden; }
.map-canvas { display: block; width: 100%; height: 275px; }

.urban { fill: #e8e8e8; }
.shop { fill: #fbf4df; }
.office { fill: #e3e7ea; }
.park { fill: #c8edbb; }
.water { fill: #a6d8ff; }
.creek { fill: none; stroke: #acdafc; stroke-width: 4; stroke-linejoin: round; }
.minor { fill: none; stroke: #fff; stroke-width: 4; stroke-linejoin: round; }
.major { fill: none; stroke: #fff; stroke-width: 7; stroke-linejoin: round; }
.hwy { fill: none; stroke-linejoin: round; }
.casing { stroke: #fff; stroke-width: 28; }
.casing.wide { stroke-width: 36; }
.edge { stroke: #f5cf68; stroke-width: 21; }
.edge.wide { stroke-width: 27; }
.edge.thin { stroke-width: 12; }
.fill { stroke: #ffe69b; stroke-width: 16; }
.fill.wide { stroke-width: 22; }
.fill.thin { stroke-width: 7; }
.center { stroke: #f5cf68; stroke-width: 3; }

.map-canvas text { font-family: Roboto, sans-serif; paint-order: stroke; }
.street text { font-size: 27px; fill: #6a737a; stroke: #f1f1f0; stroke-width: 7; }
.place text { font-size: 14px; fill: #4a4f55; stroke: #f3f3f3; stroke-width: 3; }
.poi text { font-size: 14px; fill: #258890; stroke: #f3f3f3; stroke-width: 3; }
.green-place text { font-size: 14px; fill: #2a8439; stroke: #f3f3f3; stroke-width: 3; text-anchor: middle; }
.route rect { fill: #fff; stroke: #6c6f72; stroke-width: 1.2; }
.route text { font-size: 10px; fill: #3d3f42; text-anchor: middle; letter-spacing: .2px; }
.interstate { font-size: 9.5px; font-weight: 700; fill: #fff; text-anchor: middle; }
.map-canvas .google { font-family: Nunito, Lato, sans-serif; font-size: 23.5px; font-weight: 600; stroke: #fff; stroke-width: 2; }

.map-controls {
  position: absolute;
  right: 11px; top: 80px;
  width: 44px;
  display: flex;
  flex-direction: column;
  gap: 35px;
}
.control {
  width: 44px;
  padding: 0;
  border: 0;
  border-radius: 2px;
  background: #fff;
  box-shadow: 0 1px 4px rgba(0, 0, 0, .25);
  display: flex;
  flex-direction: column;
  align-items: center;
}
.pegman { height: 44px; justify-content: center; }
.zoom { height: 89px; padding: 12px 0; justify-content: space-between; }
.divider { width: 33px; height: 1px; background: #e6e6e6; }
.map-legal {
  position: absolute;
  right: 0; bottom: 0;
  height: 16px;
  display: flex;
  background: rgba(245, 245, 245, .75);
  color: #444;
  font: 11px/17px Roboto, sans-serif;
  white-space: nowrap;
}
.map-legal span { padding: 0 6px; }
.map-legal span:last-child { padding-right: 7px; }
.map-legal span + span { border-left: 1px solid #e8e8e6; }

.address {
  display: flex;
  align-items: center;
  height: 38px;
  padding-top: 7px;
  font-size: 16.4px;
  white-space: nowrap;
}
.addr-start { flex: none; width: 94px; }
.redacted { flex: none; position: relative; }
.sale-price { height: 26px; color: #4e73df; font-size: 21.9px; }
.highlight {
  position: absolute;
  left: 6px; top: 331px;
  width: 266px; height: 61px;
  border: 3px solid #fb366f;
}

.stats {
  display: grid;
  grid-template-columns: repeat(6, 153px);
  column-gap: 159.6px;
  margin: 28px 0 45px 1px;
}
.stat {
  height: 94px;
  padding: 20px 22px 0;
  border-radius: 5px;
  background: #4e73df;
  box-shadow: 0 2.6px 30px rgba(58, 59, 69, .15), 0 0 0 1px rgba(227, 230, 240, .6);
}
.stat-head {
  display: flex;
  justify-content: space-between;
  align-items: center;
  height: 26px;
  color: #fff;
  font-size: 13px;
  font-weight: 600;
}
.ico { fill: #fff; position: relative; top: 1px; }
.stat-value { color: rgba(255, 255, 255, .5); font-size: 16.4px; line-height: 27px; }

.records {
  height: 359px;
  padding: 21px 22px 0;
  border-bottom: 0;
  border-radius: 6px 6px 0 0;
}
.records-title { height: 36px; color: #4e73df; font-size: 21.85px; font-weight: 700; line-height: 28px; }
.record-cols { display: grid; grid-template-columns: 915px 1fr; letter-spacing: .07px; }
.record-cols ul { padding-left: 44px; }
```
